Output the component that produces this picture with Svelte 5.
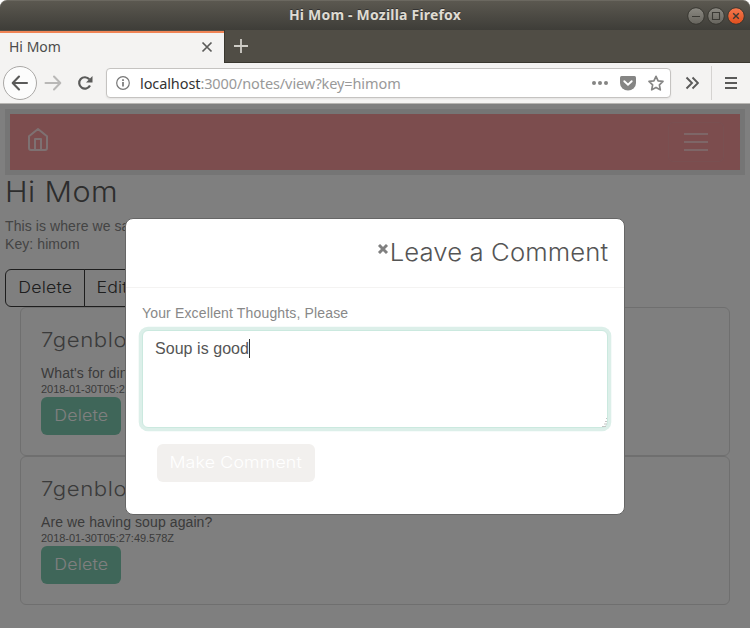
<script>
  const comments = [
    { author: '7genblogger', text: "What's for dinner?", time: '2018-01-30T05:27:30.114Z' },
    { author: '7genblogger', text: 'Are we having soup again?', time: '2018-01-30T05:27:49.578Z' }
  ];
  let draft = $state('Soup is good');
</script>

<div class="window">
  <header class="titlebar">
    <span class="caption">Hi Mom - Mozilla Firefox</span>
    <div class="controls">
      <svg width="58" height="20" viewBox="0 0 58 20">
        <defs>
          <linearGradient id="gray" x1="0" y1="0" x2="0" y2="1"><stop offset="0" stop-color="#8b8982" /><stop offset="1" stop-color="#66645d" /></linearGradient>
          <linearGradient id="orange" x1="0" y1="0" x2="0" y2="1"><stop offset="0" stop-color="#f4794f" /><stop offset="1" stop-color="#e04e1c" /></linearGradient>
        </defs>
        <g stroke="#373630" stroke-width="1">
          <circle cx="9" cy="10" r="8.3" fill="url(#gray)" />
          <circle cx="29" cy="10" r="8.3" fill="url(#gray)" />
          <circle cx="49" cy="10" r="8.3" fill="url(#orange)" />
        </g>
        <g fill="none" stroke="#3a3934" stroke-width="1.1">
          <path d="M5 10.5h8M25.5 6.5h7v7h-7z" />
          <path d="M46.2 7.2l5.6 5.6M51.8 7.2l-5.6 5.6" stroke-width="1.4" />
        </g>
      </svg>
    </div>
  </header>

  <div class="tabs">
    <div class="tab">
      <span>Hi Mom</span>
      <svg width="12" height="12" viewBox="0 0 12 12"><path d="M1.5 1.5l9 9M10.5 1.5l-9 9" stroke="#5b5b5a" stroke-width="1.7" fill="none" /></svg>
    </div>
    <div class="newtab">
      <svg width="14" height="14" viewBox="0 0 14 14"><path d="M7 0v14M0 7h14" stroke="#cfcdc6" stroke-width="1.8" /></svg>
    </div>
  </div>

  <div class="toolbar">
    <div class="back">
      <svg width="18" height="16" viewBox="0 0 18 16"><path d="M16 8H2M8 1.5L1.7 8 8 14.5" fill="none" stroke="#5a5a59" stroke-width="2.1" stroke-linecap="round" stroke-linejoin="round" /></svg>
    </div>
    <svg class="forward" width="18" height="16" viewBox="0 0 18 16"><path d="M1.5 8h14M10 1.5L16.3 8 10 14.5" fill="none" stroke="#b9b8b7" stroke-width="2" stroke-linecap="round" stroke-linejoin="round" /></svg>
    <svg class="reload" width="16" height="16" viewBox="0 0 16 16"><path d="M13 10.5A5.7 5.7 0 1 1 12.3 4.3" fill="none" stroke="#5a5a59" stroke-width="2.2" /><path d="M15.5 1v6.500H9z" fill="#5a5a59" /></svg>
    <div class="address">
      <svg class="info" width="14" height="14" viewBox="0 0 14 14"><circle cx="7" cy="7" r="6.3" fill="none" stroke="#777" stroke-width="1.2" /><path d="M7 6v4.500M7 3.300v1.600" stroke="#777" stroke-width="1.7" /></svg>
      <span class="url">localhost<i>:3000/notes/view?key=himom</i></span>
      <svg class="page-actions" width="74" height="18" viewBox="0 0 74 18">
        <g fill="#858584"><circle cx="3" cy="9" r="2" /><circle cx="9" cy="9" r="2" /><circle cx="15" cy="9" r="2" />
          <path d="M30.500 2h13Q45 2 45 3.500V9a8 7.500 0 0 1-16 0V3.500Q29 2 30.500 2z" /></g>
        <path d="M33.300 7.200L37 10.700l3.700-3.500" fill="none" stroke="#fff" stroke-width="1.9" stroke-linecap="round" />
        <path d="M65 2.300l2.100 4.500 4.900.6-3.600 3.400.9 5L65 13.400l-4.300 2.400.9-5L58 7.400l4.900-.6z" fill="none" stroke="#858584" stroke-width="1.7" stroke-linejoin="round" />
      </svg>
    </div>
    <svg class="more" width="14" height="14" viewBox="0 0 14 14"><path d="M1.5 1.5L7 7l-5.5 5.500M7.500 1.500L13 7l-5.500 5.500" fill="none" stroke="#5a5a59" stroke-width="1.9" /></svg>
    <div class="menu"><svg width="12" height="12" viewBox="0 0 12 12"><path d="M0 1h12M0 6h12M0 11h12" stroke="#5a5a59" stroke-width="2" /></svg></div>
  </div>

  <main>
    <nav>
      <svg width="22" height="24" viewBox="0 0 22 24"><path d="M2 9.200L11 2l9 7.200V21q0 2-2 2H4q-2 0-2-2zM8 23V12h6v11" fill="none" stroke="#fff" stroke-opacity=".72" stroke-width="2" stroke-linejoin="round" /></svg>
      <button class="toggler" aria-label="Menu"><b></b><b></b><b></b></button>
    </nav>
    <h1>Hi Mom</h1>
    <p class="intro">This is where we say hi to mom.<br />Key: himom</p>
    <div class="group"><button><span>Delete</span></button><button><span>Edit</span></button></div>
    <section>
      {#each comments as c}
        <article>
          <h2>{c.author}</h2>
          <p>{c.text}</p>
          <small>{c.time}</small>
          <button><span>Delete</span></button>
        </article>
      {/each}
    </section>

    <div class="backdrop">
      <div class="modal" role="dialog">
        <div class="modal-head">
          <svg width="12" height="10" viewBox="0 0 12 10"><path d="M2 1l8 8M10 1L2 9" stroke="#808080" stroke-width="2.9" /></svg>
          <h3>Leave a Comment</h3>
        </div>
        <div class="modal-body">
          <label for="thoughts">Your Excellent Thoughts, Please</label>
          <div class="field">
            <textarea id="thoughts" bind:value={draft}></textarea>
            <span class="caret"></span>
            <svg class="grip" width="5" height="9" viewBox="0 0 5 9"><path d="M4 .5h1M3 3.500h2M2 6h3M0 8.500h4" stroke="#c4c4c4" /></svg>
          </div>
          <button><span>Make Comment</span></button>
        </div>
      </div>
    </div>
  </main>
</div>

<style>
  :global(body) { margin: 0; background: #fff; }
  * { box-sizing: border-box; }
  svg { display: block; flex: none; }
  h1, h2, h3, p { margin: 0; font-weight: 300; }
  button { font: 300 16px/22px Inter, sans-serif; padding: 0 0 2px; margin: 0; white-space: nowrap; }
  button span { display: inline-block; transform: scaleX(1.11); letter-spacing: .15px; }
  .window { width: 750px; height: 628px; display: flex; flex-direction: column; overflow: hidden; font-family: "Liberation Sans", Arial, sans-serif; }
  .titlebar { height: 30px; flex: none; display: flex; align-items: center; padding-right: 5px; border-radius: 7px 7px 0 0; background: linear-gradient(#5b5850, #3e3d38); border-top: 1px solid #6b6860; }
  .caption { flex: 1; padding-left: 63px; text-align: center; color: #dfdbd2; font: bold 14px/28px "Noto Sans", sans-serif; letter-spacing: .2px; text-shadow: 0 -1px #333; position: relative; top: -1px; }
  .controls { width: 58px; }
  .tabs { height: 33px; flex: none; display: flex; background: #504d45; }
  .tab { width: 224px; border-top: 2px solid #f08455; margin-top: 1px; background: #f4f3f2; padding: 0 11px 2px 9px; display: flex; align-items: center; justify-content: space-between; color: #4c4c4c; font: 14px/28px "Noto Sans", sans-serif; }
  .newtab { flex: 1; padding: 9px 0 0 9px; border-left: 1px solid #39372f; border-bottom: 1px solid #39372f; }
  .toolbar { height: 41px; flex: none; display: flex; align-items: center; background: #f4f3f2; border-bottom: 1px solid #b7b5b2; padding-left: 3px; }
  .back { width: 34px; height: 34px; border: 1px solid #aaa8a6; border-radius: 50%; background: #fcfcfc; display: flex; align-items: center; justify-content: center; }
  .forward { margin-left: 7px; }
  .reload { margin-left: 15px; }
  .address { width: 565px; height: 30px; margin-left: 13px; border: 1px solid #c5c3c1; border-radius: 4px; background: #fff; display: flex; align-items: center; padding: 0 5px 0 9px; box-shadow: 0 1px 2px #0001; }
  .url { flex: 1; margin-left: 10px; color: #333; font: 14.5px/28px "Noto Sans", sans-serif; letter-spacing: -.1px; }
  .url i { font-style: normal; color: #999; }
  .more { margin-left: 14px; }
  .menu { height: 34px; margin-left: 12px; padding-left: 13px; display: flex; align-items: center; border-left: 1px solid #d5d3d1; }
  main { flex: 1; position: relative; padding: 5px; background: #fff; }
  nav { height: 66px; border: 5px solid #ebebeb; background: #f89a9d; display: flex; justify-content: space-between; padding: 8px 16px 0 17px; }
  nav svg { margin-top: 5px; }
  .toggler { width: 56px; height: 40px; border: 1px solid #f2a0a3; border-radius: 5px; background: none; display: flex; flex-direction: column; align-items: center; justify-content: center; gap: 6px; padding: 0; }
  .toggler b { width: 24px; height: 2px; background: #ffffff80; }
  h1 { font: 300 28px/34px Inter, sans-serif; color: #5a5a5a; letter-spacing: .4px; transform: scaleX(1.09); transform-origin: left; }
  .intro { margin-top: 8px; font-size: 14px; line-height: 18px; color: #888; letter-spacing: .08px; }
  .group { margin-top: 16px; display: flex; }
  .group button { height: 38px; width: 80px; border: 1px solid #3d3d3d; border-radius: 6px 0 0 6px; background: none; color: #3d3d3d; }
  .group button + button { width: 57px; margin-left: -1px; border-radius: 0 6px 6px 0; }
  section { padding: 0 15px; }
  article { height: 149px; border: 1px solid #dedede; border-radius: 6px; padding: 20px; display: flex; flex-direction: column; align-items: flex-start; }
  h2 { font: 300 20px/24px Inter, sans-serif; color: #777; letter-spacing: .5px; transform: scaleX(1.11); transform-origin: left; }
  article p { margin-top: 12px; font-size: 14px; line-height: 18px; color: #777; letter-spacing: .1px; }
  small { font-size: 11px; line-height: 15px; color: #777; letter-spacing: -.04px; }
  article button { height: 38px; width: 80px; border: 0; border-radius: 6px; background: #7eccb2; color: #fff; }
  .backdrop { position: absolute; inset: 0; background: rgba(0, 0, 0, .5); display: flex; justify-content: center; align-items: flex-start; padding-top: 114px; }
  .modal { width: 500px; height: 297px; border: 1px solid #666; border-radius: 8px; background: #fff; }
  .modal-head { height: 69px; border-bottom: 1px solid #f4f3f2; display: flex; justify-content: flex-end; padding: 16px 16px 0 0; }
  .modal-head svg { margin: 9px 1px 0 0; }
  h3 { font: 300 24px/36px Inter, sans-serif; color: #555; letter-spacing: .1px; margin-left: 14px; transform: scaleX(1.07); transform-origin: right; }
  .modal-body { padding: 16px; display: flex; flex-direction: column; align-items: flex-start; }
  label { font-size: 14px; line-height: 18px; color: #888; letter-spacing: .15px; }
  .field { position: relative; width: 466px; height: 98px; margin-top: 8px; }
  textarea { display: block; width: 100%; height: 100%; resize: none; border: 1px solid #cbe9df; border-radius: 6px; outline: 0; box-shadow: 0 0 0 3.3px #dcefe9; padding: 6px 12px; font: 16px/24px "Liberation Sans", Arial, sans-serif; letter-spacing: .05px; color: #555; background: #fff; }
  .caret { position: absolute; left: 107px; top: 9px; width: 1px; height: 19px; background: #333; }
  .grip { position: absolute; right: 1px; bottom: 1px; }
  .modal-body button { margin: 16px 0 0 15px; width: 158px; height: 38px; border: 0; border-radius: 6px; background: #f2f0ee; color: #fff; }
</style>
